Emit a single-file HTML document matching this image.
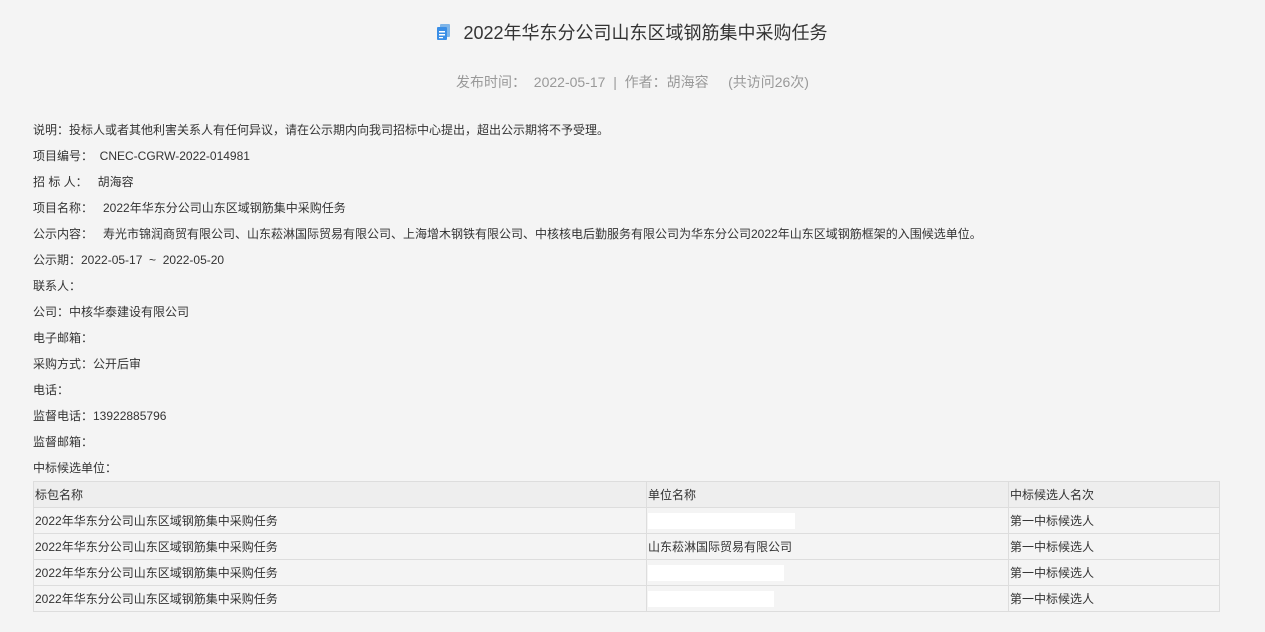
<!DOCTYPE html>
<html><head><meta charset="utf-8"><style>
body{margin:0;width:1265px;height:632px;background:#f4f4f4;font-family:"Liberation Sans","Noto Sans CJK SC",sans-serif;color:#333;position:relative;overflow:hidden}
.t{position:absolute;left:0;width:1265px;text-align:center;top:21px;font-size:18px;color:#333;line-height:24px}
.m{position:absolute;left:0;width:1265px;text-align:center;top:72px;font-size:14px;color:#999;line-height:20px}
.l{position:absolute;left:33px;font-size:12px;line-height:16px;white-space:pre}
table{position:absolute;left:33px;top:481px;width:1187px;border-collapse:collapse;font-size:12px}
td{border:1px solid #ddd;height:25px;padding:0 0 0 1px;line-height:16px}
tr.h td{background:#eee}
.w{display:inline-block;background:#fff;height:16px;vertical-align:middle}
</style></head><body>
<div class="t"><svg width="14" height="16" viewBox="0 0 14 16" style="vertical-align:-1px;margin-right:12px"><rect x="3" y="0" width="10" height="13" rx="1" fill="#7fb5e8"/><rect x="0" y="3" width="10" height="13" rx="1" fill="#3a8ee6"/><rect x="2" y="7" width="6" height="1.5" fill="#fff"/><rect x="2" y="10" width="6" height="1.5" fill="#fff"/><rect x="2" y="13" width="4" height="1.2" fill="#fff"/></svg>2022年华东分公司山东区域钢筋集中采购任务</div>
<div class="m">发布时间：&nbsp; 2022-05-17 &nbsp;|&nbsp; 作者：胡海容 &nbsp;&nbsp;&nbsp; (共访问26次)</div>
<div class="l" style="top:122px">说明：投标人或者其他利害关系人有任何异议，请在公示期内向我司招标中心提出，超出公示期将不予受理。</div>
<div class="l" style="top:148px">项目编号：  CNEC-CGRW-2022-014981</div>
<div class="l" style="top:174px">招 标 人：   胡海容</div>
<div class="l" style="top:200px">项目名称：   2022年华东分公司山东区域钢筋集中采购任务</div>
<div class="l" style="top:226px">公示内容：   寿光市锦润商贸有限公司、山东菘淋国际贸易有限公司、上海增木钢铁有限公司、中核核电后勤服务有限公司为华东分公司2022年山东区域钢筋框架的入围候选单位。</div>
<div class="l" style="top:252px">公示期：2022-05-17  ~  2022-05-20</div>
<div class="l" style="top:278px">联系人：</div>
<div class="l" style="top:304px">公司：中核华泰建设有限公司</div>
<div class="l" style="top:330px">电子邮箱：</div>
<div class="l" style="top:356px">采购方式：公开后审</div>
<div class="l" style="top:382px">电话：</div>
<div class="l" style="top:408px">监督电话：13922885796</div>
<div class="l" style="top:434px">监督邮箱：</div>
<div class="l" style="top:460px">中标候选单位：</div>
<table>
<tr class="h"><td style="width:611px">标包名称</td><td style="width:360px">单位名称</td><td>中标候选人名次</td></tr>
<tr><td>2022年华东分公司山东区域钢筋集中采购任务</td><td><span class="w" style="width:147px"></span></td><td>第一中标候选人</td></tr>
<tr><td>2022年华东分公司山东区域钢筋集中采购任务</td><td>山东菘淋国际贸易有限公司</td><td>第一中标候选人</td></tr>
<tr><td>2022年华东分公司山东区域钢筋集中采购任务</td><td><span class="w" style="width:136px"></span></td><td>第一中标候选人</td></tr>
<tr><td>2022年华东分公司山东区域钢筋集中采购任务</td><td><span class="w" style="width:126px"></span></td><td>第一中标候选人</td></tr>
</table>
</body></html>
